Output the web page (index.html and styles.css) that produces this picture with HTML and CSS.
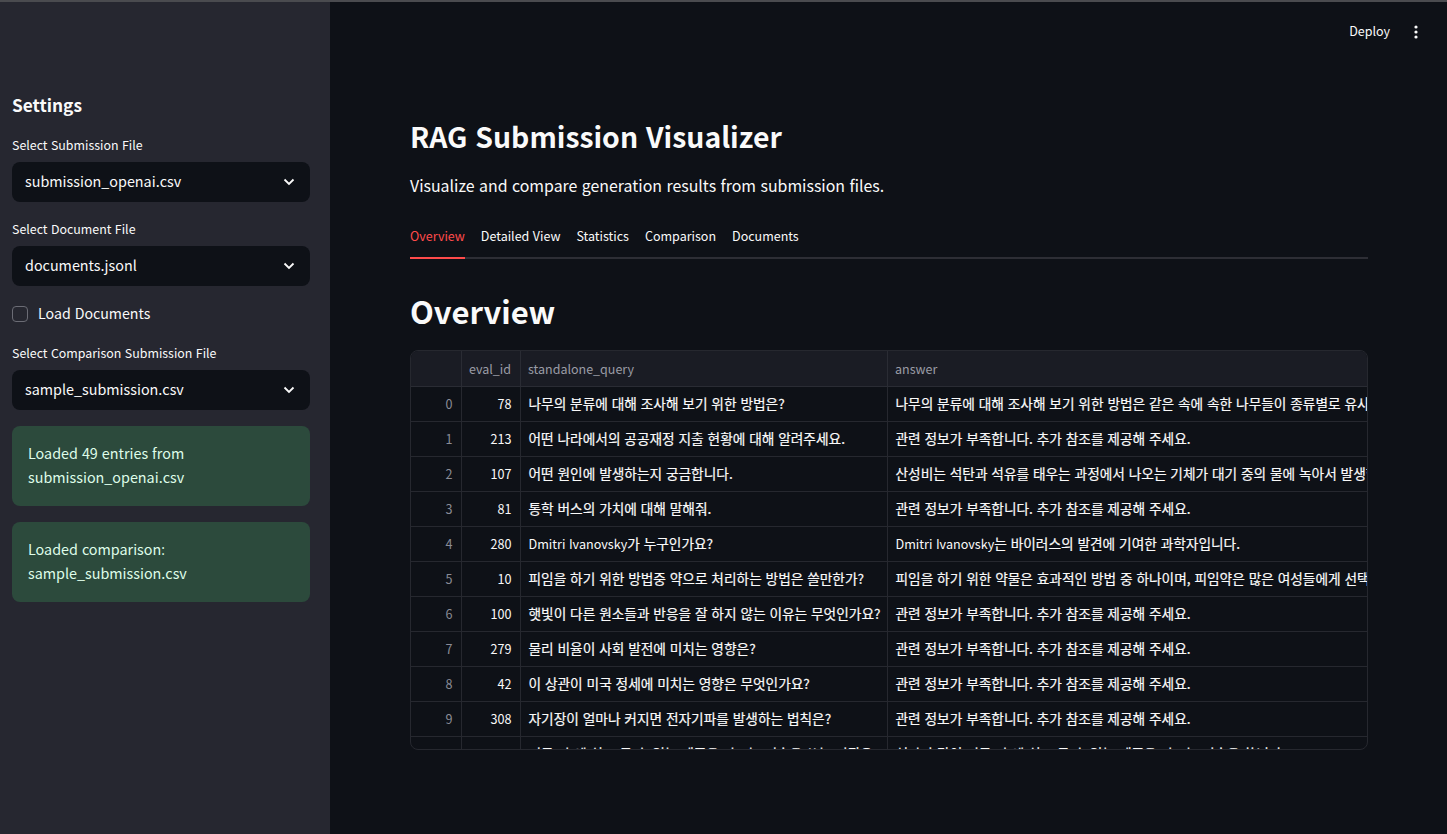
FILE: index.html
```html
<!DOCTYPE html>
<html lang="ko">
<head>
<meta charset="utf-8">
<title>RAG Submission Visualizer</title>
<link rel="stylesheet" href="styles.css">
</head>
<body>
<div class="topline"></div>
<div class="app">
  <aside class="sidebar">
    <h2 class="side-title">Settings</h2>
    <div class="field">
      <label class="field-label">Select Submission File</label>
      <div class="select"><span class="value">submission_openai.csv</span><svg class="chev" viewBox="0 0 12 8" width="12" height="8"><path d="M1.5 1.5 6 6l4.5-4.5" fill="none" stroke="#fafafa" stroke-width="1.8"/></svg></div>
    </div>
    <div class="field">
      <label class="field-label">Select Document File</label>
      <div class="select"><span class="value">documents.jsonl</span><svg class="chev" viewBox="0 0 12 8" width="12" height="8"><path d="M1.5 1.5 6 6l4.5-4.5" fill="none" stroke="#fafafa" stroke-width="1.8"/></svg></div>
    </div>
    <div class="check"><span class="box"></span><span class="value">Load Documents</span></div>
    <div class="field">
      <label class="field-label">Select Comparison Submission File</label>
      <div class="select"><span class="value">sample_submission.csv</span><svg class="chev" viewBox="0 0 12 8" width="12" height="8"><path d="M1.5 1.5 6 6l4.5-4.5" fill="none" stroke="#fafafa" stroke-width="1.8"/></svg></div>
    </div>
    <div class="alert">Loaded 49 entries from<br>submission_openai.csv</div>
    <div class="alert">Loaded comparison<span class="colon">:</span><br>sample_submission.csv</div>
  </aside>
  <main class="main">
    <header class="toolbar">
      <span class="deploy">Deploy</span>
      <svg class="kebab" viewBox="0 0 4 14" width="4" height="14"><circle cx="2" cy="2" r="1.6" fill="#fafafa"/><circle cx="2" cy="7" r="1.6" fill="#fafafa"/><circle cx="2" cy="12" r="1.6" fill="#fafafa"/></svg>
    </header>
    <div class="content">
      <h1 class="title">RAG Submission Visualizer</h1>
      <p class="subtitle">Visualize and compare generation results from submission files.</p>
      <nav class="tabs">
        <span class="tab active">Overview</span>
        <span class="tab">Detailed View</span>
        <span class="tab">Statistics</span>
        <span class="tab">Comparison</span>
        <span class="tab">Documents</span>
      </nav>
      <h2 class="section">Overview</h2>
      <div class="table-wrap">
        <table class="grid">
          <colgroup><col class="c-idx"><col class="c-id"><col class="c-q"><col class="c-a"></colgroup>
          <thead><tr><th></th><th>eval_id</th><th>standalone_query</th><th>answer</th></tr></thead>
          <tbody>
            <tr><td class="idx">0</td><td class="num">78</td><td>나무의 분류에 대해 조사해 보기 위한 방법은?</td><td>나무의 분류에 대해 조사해 보기 위한 방법은 같은 속에 속한 나무들이 종류별로 유사한 특징을 가지는지 확인하는 것입니다.</td></tr>
            <tr><td class="idx">1</td><td class="num">213</td><td>어떤 나라에서의 공공재정 지출 현황에 대해 알려주세요.</td><td>관련 정보가 부족합니다. 추가 참조를 제공해 주세요.</td></tr>
            <tr><td class="idx">2</td><td class="num">107</td><td>어떤 원인에 발생하는지 궁금합니다.</td><td>산성비는 석탄과 석유를 태우는 과정에서 나오는 기체가 대기 중의 물에 녹아서 발생합니다. 이러한 기체는 대기 오염의 원인입니다.</td></tr>
            <tr><td class="idx">3</td><td class="num">81</td><td>통학 버스의 가치에 대해 말해줘.</td><td>관련 정보가 부족합니다. 추가 참조를 제공해 주세요.</td></tr>
            <tr><td class="idx">4</td><td class="num">280</td><td><span class="lat">Dmitri Ivanovsky</span>가 누구인가요?</td><td><span class="lat">Dmitri Ivanovsky</span>는 바이러스의 발견에 기여한 과학자입니다.</td></tr>
            <tr><td class="idx">5</td><td class="num">10</td><td>피임을 하기 위한 방법중 약으로 처리하는 방법은 쓸만한가?</td><td>피임을 하기 위한 약물은 효과적인 방법 중 하나이며, 피임약은 많은 여성들에게 선택되는 방법입니다.</td></tr>
            <tr><td class="idx">6</td><td class="num">100</td><td>햇빛이 다른 원소들과 반응을 잘 하지 않는 이유는 무엇인가요?</td><td>관련 정보가 부족합니다. 추가 참조를 제공해 주세요.</td></tr>
            <tr><td class="idx">7</td><td class="num">279</td><td>물리 비율이 사회 발전에 미치는 영향은?</td><td>관련 정보가 부족합니다. 추가 참조를 제공해 주세요.</td></tr>
            <tr><td class="idx">8</td><td class="num">42</td><td>이 상관이 미국 정세에 미치는 영향은 무엇인가요?</td><td>관련 정보가 부족합니다. 추가 참조를 제공해 주세요.</td></tr>
            <tr><td class="idx">9</td><td class="num">308</td><td>자기장이 얼마나 커지면 전자기파를 발생하는 법칙은?</td><td>관련 정보가 부족합니다. 추가 참조를 제공해 주세요.</td></tr>
            <tr><td class="idx">10</td><td class="num">25</td><td>기름 판 에 쉬고 둘 수 있는 제품을 만드는 기술을 쓰는 기관은</td><td>석판과 같이 기름 판 에 쉬고 둘 수 있는 제품을 만드는 기술을 씁니다.</td></tr>
          </tbody>
        </table>
      </div>
    </div>
  </main>
</div>
</body>
</html>
```
FILE: styles.css
```css
* { box-sizing: border-box; }
html, body { margin: 0; height: 100%; }
body {
  background: #0e1117;
  color: #fafafa;
  font-family: "Noto Sans CJK KR", "Noto Sans", sans-serif;
  overflow: hidden;
}
.topline { height: 2px; background: #4a4b4f; }
.app { display: flex; height: 832px; }

.sidebar {
  width: 330px;
  flex: none;
  background: #262730;
  padding: 89px 20px 0 12px;
  display: flex;
  flex-direction: column;
}
.side-title { margin: 0 0 15px; font-size: 17.3px; line-height: 28px; font-weight: 700; }
.field { margin-bottom: 16px; }
.field-label { display: block; font-size: 12.4px; line-height: 22px; margin-bottom: 6px; }
.select {
  height: 40px;
  background: #0e1117;
  border-radius: 8px;
  padding: 0 15px 0 13px;
  display: flex;
  align-items: center;
  justify-content: space-between;
  font-size: 14.35px;
}
.value { margin-bottom: 3px; }
.chev { flex: none; }
.check { display: flex; align-items: center; gap: 10px; height: 24px; margin: 0 0 16px; font-size: 14.2px; }
.box { width: 16px; height: 16px; border: 1px solid #6b6c75; border-radius: 4px; background: #262730; }
.alert {
  background: #2c4a3c;
  color: #dffde9;
  border-radius: 8px;
  padding: 15px 16px 17px;
  font-size: 14.35px;
  line-height: 24px;
  height: 80px;
  margin-bottom: 16px;
}
.colon { font-family: "Open Sans", sans-serif; font-size: 14px; line-height: 0; }

.main { flex: 1; min-width: 0; display: flex; flex-direction: column; }
.toolbar { height: 60px; display: flex; align-items: center; justify-content: flex-end; gap: 24px; padding: 0 29px 0 0; }
.deploy { font-size: 12.5px; margin-bottom: 4px; }
.content { padding: 52px 79px 0 80px; }
.title { margin: 0; font-size: 28.4px; line-height: 44px; font-weight: 700; }
.subtitle { margin: 15px 0 0; font-size: 15.9px; line-height: 26px; }
.tabs { display: flex; gap: 16px; margin-top: 20px; height: 40px; border-bottom: 2px solid #2d2e35; }
.tab { font-size: 12.5px; line-height: 20px; padding-top: 7px; height: 40px; }
.tab.active { color: #ff4b4b; border-bottom: 2px solid #ff4b4b; }
.section { margin: 28px 0 15px; font-size: 31px; line-height: 48px; font-weight: 700; }

.table-wrap {
  height: 400px;
  border: 1px solid #26282f;
  border-radius: 8px;
  overflow: hidden;
}
.grid {
  width: 100%;
  table-layout: fixed;
  border-collapse: collapse;
  font-size: 13.7px;
  -webkit-text-stroke: 0.2px #fafafa;
}
.c-idx { width: 50px; }
.c-id { width: 59px; }
.c-q { width: 367px; }
th {
  height: 35px;
  background: #1a1c24;
  color: #9a9ca6;
  font-size: 12.5px;
  font-weight: 400;
  text-align: left;
  padding: 0 8px 0 7.5px;
  border-right: 1px solid #2a2c34;
  border-bottom: 1px solid #2a2c34;
  -webkit-text-stroke: 0;
}
td {
  height: 35px;
  padding: 0 8px 2px 8px;
  white-space: nowrap;
  overflow: hidden;
  border-right: 1px solid #26282f;
  border-bottom: 1px solid #26282f;
}
td:last-child, th:last-child { border-right: 0; padding-right: 1px; }
.idx { color: #8a8c96; text-align: right; font-size: 12.6px; padding-bottom: 0; -webkit-text-stroke: 0; }
.num { text-align: right; font-size: 12.6px; padding-bottom: 0; -webkit-text-stroke: 0; }
.lat { font-size: 12.6px; -webkit-text-stroke: 0; }
```
